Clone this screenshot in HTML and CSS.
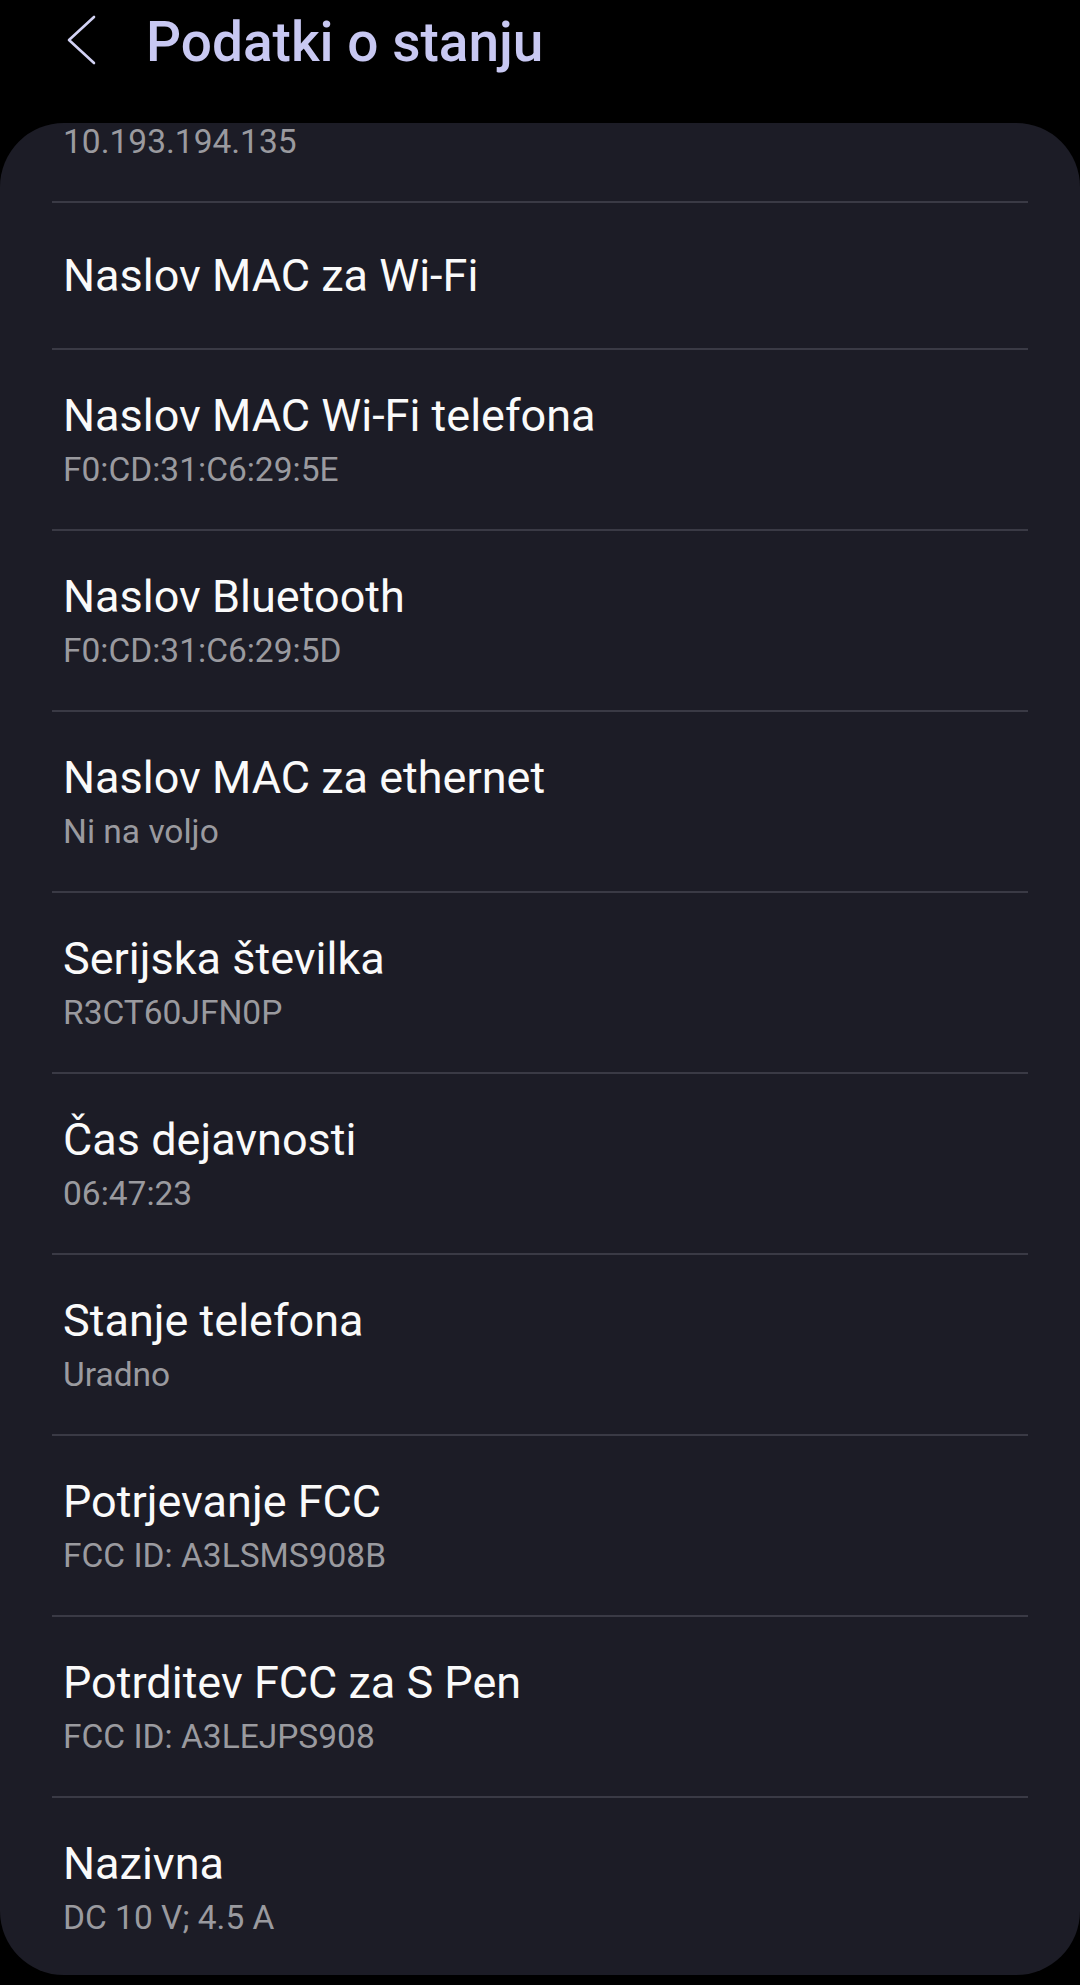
FILE: index.html
```html
<!DOCTYPE html>
<html lang="sl">
<head>
  <meta charset="UTF-8" />
  <meta name="viewport" content="width=device-width, initial-scale=1.0"/>
  <title>Podatki o stanju</title>
  <link rel="stylesheet" href="styles.css">
</head>
<body>
  <header class="top-bar">
    <svg class="back-icon" width="30" height="50" viewBox="0 0 30 50">
      <path d="M28 2 L3 25 L28 48" fill="none" stroke="#d2d2f4" stroke-width="2.6" stroke-linecap="round" stroke-linejoin="round"/>
    </svg>
    <h1>Podatki o stanju</h1>
  </header>

  <!-- status list, scrolled so the IP row is cut at the top -->
  <div class="status-card">
    <div class="row partial">
      <div class="value">10.193.194.135</div>
    </div>

    <div class="row single">
      <div class="label">Naslov MAC za Wi-Fi</div>
    </div>

    <div class="row">
      <div class="label">Naslov MAC Wi-Fi telefona</div>
      <div class="value">F0:CD:31:C6:29:5E</div>
    </div>

    <div class="row">
      <div class="label">Naslov Bluetooth</div>
      <div class="value">F0:CD:31:C6:29:5D</div>
    </div>

    <div class="row">
      <div class="label">Naslov MAC za ethernet</div>
      <div class="value">Ni na voljo</div>
    </div>

    <div class="row">
      <div class="label">Serijska številka</div>
      <div class="value">R3CT60JFN0P</div>
    </div>

    <div class="row">
      <div class="label">Čas dejavnosti</div>
      <div class="value">06:47:23</div>
    </div>

    <div class="row">
      <div class="label">Stanje telefona</div>
      <div class="value">Uradno</div>
    </div>

    <div class="row">
      <div class="label">Potrjevanje FCC</div>
      <div class="value">FCC ID: A3LSMS908B</div>
    </div>

    <div class="row">
      <div class="label">Potrditev FCC za S Pen</div>
      <div class="value">FCC ID: A3LEJPS908</div>
    </div>

    <div class="row">
      <div class="label">Nazivna</div>
      <div class="value">DC 10 V; 4.5 A</div>
    </div>
  </div>
</body>
</html>
```

FILE: styles.css
```css
body {
  margin: 0;
  background: #000;
  font-family: Roboto, "Noto Sans", sans-serif;
  color: #fafafa;
}

.top-bar {
  box-sizing: border-box;
  height: 123px;
  padding: 15px 0 0 66px;
  display: flex;
  align-items: flex-start;
}

.back-icon {
  flex-shrink: 0;
}

.top-bar h1 {
  margin: 0 0 0 50px;
  font-size: 55px;
  line-height: 55px;
  font-weight: 500;
  color: #c8c8f2;
}

.status-card {
  background: #1c1c26;
  border-radius: 64px;
  overflow: hidden;
}

.row {
  margin: 0 52px;
  padding: 40px 11px 37px;
  border-top: 2px solid #3a3a45;
}

.row.partial {
  border-top: none;
  padding: 0 11px 40px;
}

.row.partial .value {
  line-height: 38px;
}

.row.single {
  padding: 47px 11px 46px;
}

.row:last-child {
  padding-bottom: 35px;
}

.label {
  font-size: 45px;
  line-height: 52px;
  margin-bottom: 6px;
}

.row.single .label {
  margin-bottom: 0;
}

.value {
  font-size: 33.5px;
  line-height: 44px;
  color: #9a9a9f;
}
```
